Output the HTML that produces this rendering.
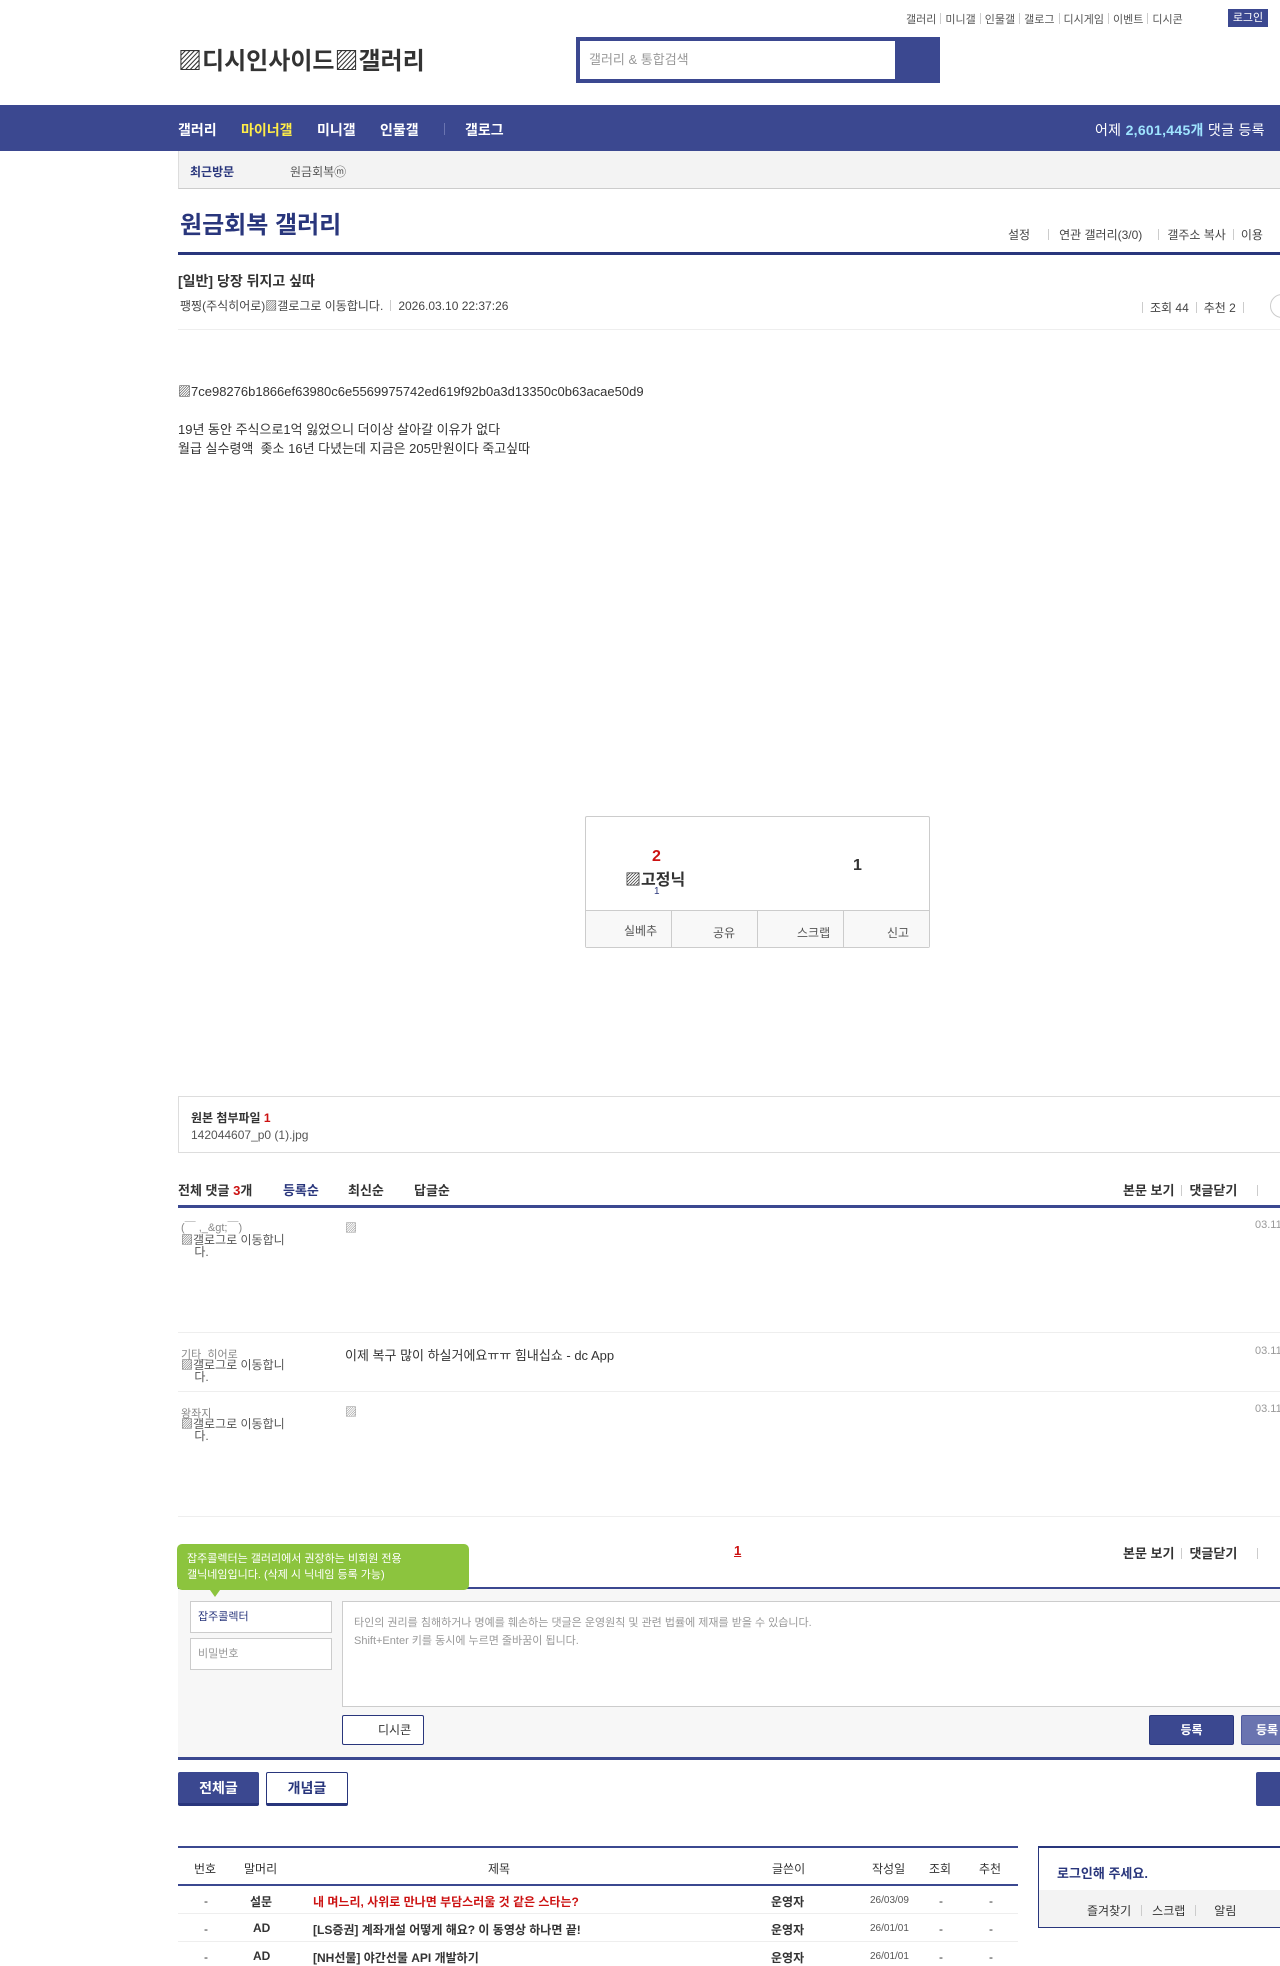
<!DOCTYPE html>
<html><head><meta charset="utf-8">
<style>
*{margin:0;padding:0;box-sizing:border-box}
body{width:1280px;height:1960px;overflow:hidden;background:#fff;position:relative;font-family:"Liberation Sans","Noto Sans CJK KR",sans-serif;color:#333;font-size:12px}
.a{position:absolute;white-space:nowrap}
.navy{color:#29367c}
.b{font-weight:bold}
.sep{display:inline-block;width:1px;height:11px;background:#ccc;margin:0 7px;vertical-align:-1px}
</style></head><body>

<div class="a" style="left:906px;top:11px;font-size:11px;color:#555">갤러리<span class="sep" style="margin:0 4px"></span>미니갤<span class="sep" style="margin:0 4px"></span>인물갤<span class="sep" style="margin:0 4px"></span>갤로그<span class="sep" style="margin:0 4px"></span>디시게임<span class="sep" style="margin:0 4px"></span>이벤트<span class="sep" style="margin:0 4px"></span>디시콘</div>
<div class="a" style="left:1228px;top:9px;width:40px;height:18px;background:#3b4890;color:#fff;font-size:11px;text-align:center;line-height:18px">로그인</div>

<div class="a b" style="left:178px;top:41px;font-size:24px;color:#333">▨디시인사이드▨갤러리</div>

<div class="a" style="left:576px;top:37px;width:364px;height:46px;background:#3b4890"></div>
<div class="a" style="left:580px;top:41px;width:315px;height:38px;background:#fff;color:#999;font-size:13px;line-height:38px;padding-left:9px">갤러리 &amp; 통합검색</div>

<div class="a" style="left:0;top:105px;width:1280px;height:46px;background:#3b4890"></div>
<div class="a b" style="left:178px;top:120px;font-size:14px;color:#fff">갤러리</div>
<div class="a b" style="left:241px;top:120px;font-size:14px;color:#ffed48">마이너갤</div>
<div class="a b" style="left:317px;top:120px;font-size:14px;color:#fff">미니갤</div>
<div class="a b" style="left:380px;top:120px;font-size:14px;color:#fff">인물갤</div>
<div class="a" style="left:444px;top:123px;width:1px;height:12px;background:#6a74b0"></div>
<div class="a b" style="left:465px;top:120px;font-size:14px;color:#fff">갤로그</div>
<div class="a" style="left:1095px;top:120px;font-size:14px;color:#fff;letter-spacing:0.3px">어제 <b style="color:#9fe4ff">2,601,445개</b> 댓글 등록</div>

<div class="a" style="left:178px;top:151px;width:1102px;height:38px;background:#f3f3f3;border-left:1px solid #ddd;border-bottom:1px solid #ccc"></div>
<div class="a b navy" style="left:190px;top:163px;font-size:12px">최근방문</div>
<div class="a" style="left:290px;top:163px;font-size:12px;color:#555">원금회복ⓜ</div>

<div class="a b" style="left:180px;top:205px;font-size:24px;color:#29367c">원금회복 갤러리</div>
<div class="a" style="left:1008px;top:226px;font-size:12px;color:#444">설정<span class="sep" style="margin:0 10px 0 18px"></span>연관 갤러리(3/0)<span class="sep" style="margin:0 8px 0 16px"></span>갤주소 복사<span class="sep"></span>이용</div>
<div class="a" style="left:178px;top:252px;width:1102px;height:3px;background:#29367c"></div>

<div class="a b" style="left:178px;top:271px;font-size:14px;color:#333">[일반] 당장 뒤지고 싶따</div>
<div class="a" style="left:180px;top:297px;font-size:12px;color:#444">팽찡(주식히어로)▨갤로그로 이동합니다.<span class="sep"></span>2026.03.10 22:37:26</div>
<div class="a" style="left:1135px;top:299px;font-size:12px;color:#444"><span class="sep"></span>조회 44<span class="sep"></span>추천 2<span class="sep"></span></div>
<div class="a" style="left:1270px;top:294px;width:24px;height:24px;border:1px solid #ccc;border-radius:12px"></div>
<div class="a" style="left:178px;top:329px;width:1102px;height:1px;background:#eee"></div>

<div class="a" style="left:178px;top:381px;font-size:13px;color:#333">▨7ce98276b1866ef63980c6e5569975742ed619f92b0a3d13350c0b63acae50d9</div>
<div class="a" style="left:178px;top:420px;font-size:13px;color:#333;line-height:19px;white-space:pre">19년 동안 주식으로1억 잃었으니 더이상 살아갈 이유가 없다
월급 실수령액  좆소 16년 다녔는데 지금은 205만원이다 죽고싶따</div>

<div class="a" style="left:585px;top:816px;width:345px;height:132px;border:1px solid #ccc;border-radius:2px"></div>
<div class="a b" style="left:652px;top:848px;font-size:16px;color:#c11">2</div>
<div class="a b" style="left:625px;top:866px;font-size:16px;color:#333">▨고정닉</div>
<div class="a" style="left:654px;top:886px;font-size:10px;color:#29367c">1</div>
<div class="a b" style="left:853px;top:857px;font-size:16px;color:#333">1</div>
<div class="a" style="left:586px;top:910px;width:343px;height:37px;background:#f8f8f8;border-top:1px solid #ccc"></div>
<div class="a" style="left:671px;top:911px;width:1px;height:36px;background:#ccc"></div>
<div class="a" style="left:757px;top:911px;width:1px;height:36px;background:#ccc"></div>
<div class="a" style="left:843px;top:911px;width:1px;height:36px;background:#ccc"></div>
<div class="a" style="left:624px;top:922px;font-size:12px;color:#555">실베추</div>
<div class="a" style="left:713px;top:924px;font-size:12px;color:#555">공유</div>
<div class="a" style="left:797px;top:924px;font-size:12px;color:#555">스크랩</div>
<div class="a" style="left:887px;top:924px;font-size:12px;color:#555">신고</div>

<div class="a" style="left:178px;top:1096px;width:1110px;height:57px;border:1px solid #ddd"></div>
<div class="a b" style="left:191px;top:1109px;font-size:12px;color:#333">원본 첨부파일 <span style="color:#c11">1</span></div>
<div class="a" style="left:191px;top:1128px;font-size:12px;color:#555">142044607_p0 (1).jpg</div>

<div class="a b" style="left:178px;top:1180px;font-size:13px;color:#333">전체 댓글 <span style="color:#c11">3</span>개</div>
<div class="a b" style="left:283px;top:1180px;font-size:13px;color:#29367c">등록순</div>
<div class="a b" style="left:348px;top:1180px;font-size:13px;color:#333">최신순</div>
<div class="a b" style="left:414px;top:1180px;font-size:13px;color:#333">답글순</div>
<div class="a b" style="left:1123px;top:1180px;font-size:13px;color:#333">본문 보기<span class="sep"></span>댓글닫기<span class="sep" style="margin-left:20px"></span></div>
<div class="a" style="left:178px;top:1205px;width:1102px;height:3px;background:#3b4890"></div>

<div class="a" style="left:181px;top:1219px;font-size:11px;color:#888">(￣ ,_&amp;gt;￣)</div>
<div class="a" style="left:181px;top:1234px;font-size:12px;color:#555;line-height:12px">▨갤로그로 이동합니<br>&nbsp;&nbsp;&nbsp;&nbsp;다.</div>
<div class="a" style="left:345px;top:1219px;font-size:12px;color:#888">▨</div>
<div class="a" style="left:1255px;top:1219px;font-size:11px;color:#999">03.11</div>
<div class="a" style="left:178px;top:1332px;width:1102px;height:1px;background:#eee"></div>

<div class="a" style="left:181px;top:1346px;font-size:11px;color:#888">기타_히어로</div>
<div class="a" style="left:181px;top:1359px;font-size:12px;color:#555;line-height:12px">▨갤로그로 이동합니<br>&nbsp;&nbsp;&nbsp;&nbsp;다.</div>
<div class="a" style="left:345px;top:1345px;font-size:13px;color:#333">이제 복구 많이 하실거에요ㅠㅠ 힘내십쇼 - dc App</div>
<div class="a" style="left:1255px;top:1345px;font-size:11px;color:#999">03.11</div>
<div class="a" style="left:178px;top:1391px;width:1102px;height:1px;background:#eee"></div>

<div class="a" style="left:181px;top:1405px;font-size:11px;color:#888">왕좌지</div>
<div class="a" style="left:181px;top:1418px;font-size:12px;color:#555;line-height:12px">▨갤로그로 이동합니<br>&nbsp;&nbsp;&nbsp;&nbsp;다.</div>
<div class="a" style="left:345px;top:1403px;font-size:12px;color:#888">▨</div>
<div class="a" style="left:1255px;top:1403px;font-size:11px;color:#999">03.11</div>
<div class="a" style="left:178px;top:1516px;width:1102px;height:1px;background:#eee"></div>

<div class="a b" style="left:734px;top:1543px;font-size:13px;color:#c11;text-decoration:underline">1</div>
<div class="a b" style="left:1123px;top:1543px;font-size:13px;color:#333">본문 보기<span class="sep"></span>댓글닫기<span class="sep" style="margin-left:20px"></span></div>

<div class="a" style="left:178px;top:1587px;width:1102px;height:173px;background:#f7f7f7;border-top:2px solid #3b4890;border-bottom:3px solid #3b4890"></div>
<div class="a" style="left:177px;top:1544px;width:292px;height:46px;background:#8cc43e;border-radius:5px;color:#fff;font-size:11px;line-height:16px;padding:7px 10px">잡주콜렉터는 갤러리에서 권장하는 비회원 전용<br>갤닉네임입니다. (삭제 시 닉네임 등록 가능)</div>
<div class="a" style="left:210px;top:1590px;width:0;height:0;border-left:5px solid transparent;border-right:5px solid transparent;border-top:7px solid #8cc43e"></div>
<div class="a" style="left:190px;top:1601px;width:142px;height:32px;border:1px solid #ccc;background:#fff;font-size:11px;color:#29367c;line-height:30px;padding-left:7px">잡주콜렉터</div>
<div class="a" style="left:190px;top:1638px;width:142px;height:32px;border:1px solid #ccc;background:#fff;font-size:11px;color:#999;line-height:30px;padding-left:7px">비밀번호</div>
<div class="a" style="left:342px;top:1601px;width:950px;height:106px;border:1px solid #ccc;background:#fff;font-size:11px;color:#999;line-height:18px;padding:12px 11px">타인의 권리를 침해하거나 명예를 훼손하는 댓글은 운영원칙 및 관련 법률에 제재를 받을 수 있습니다.<br>Shift+Enter 키를 동시에 누르면 줄바꿈이 됩니다.</div>
<div class="a" style="left:342px;top:1715px;width:82px;height:30px;border:1px solid #29367c;border-radius:2px;background:#fff;font-size:12px;color:#333;line-height:28px;padding-left:35px">디시콘</div>
<div class="a" style="left:1149px;top:1715px;width:85px;height:30px;background:#3b4890;border:1px solid #29367c;border-radius:2px;color:#fff;font-size:12px;font-weight:bold;text-align:center;line-height:28px">등록</div>
<div class="a" style="left:1241px;top:1715px;width:60px;height:30px;background:#6a74b0;border:1px solid #4f5a9e;border-radius:2px;color:#fff;font-size:12px;font-weight:bold;line-height:28px;padding-left:14px">등록</div>

<div class="a" style="left:178px;top:1772px;width:81px;height:34px;background:#3b4890;border-bottom:3px solid #29367c;border-radius:2px;color:#fff;font-size:14px;font-weight:bold;text-align:center;line-height:32px">전체글</div>
<div class="a" style="left:266px;top:1772px;width:82px;height:34px;background:#fff;border:1px solid #29367c;border-bottom:3px solid #29367c;border-radius:2px;color:#29367c;font-size:14px;font-weight:bold;text-align:center;line-height:30px">개념글</div>
<div class="a" style="left:1256px;top:1772px;width:40px;height:34px;background:#3b4890;border-radius:2px"></div>

<div class="a" style="left:178px;top:1846px;width:840px;height:2px;background:#3b4890"></div>
<div class="a" style="left:178px;top:1884px;width:840px;height:2px;background:#3b4890"></div>
<div class="a" style="left:178px;top:1913px;width:840px;height:1px;background:#eee"></div>
<div class="a" style="left:178px;top:1941px;width:840px;height:1px;background:#eee"></div>
<div class="a" style="left:194px;top:1860px;font-size:12px;color:#333">번호</div>
<div class="a" style="left:244px;top:1860px;font-size:12px;color:#333">말머리</div>
<div class="a" style="left:488px;top:1860px;font-size:12px;color:#333">제목</div>
<div class="a" style="left:772px;top:1860px;font-size:12px;color:#333">글쓴이</div>
<div class="a" style="left:872px;top:1860px;font-size:12px;color:#333">작성일</div>
<div class="a" style="left:929px;top:1860px;font-size:12px;color:#333">조회</div>
<div class="a" style="left:979px;top:1860px;font-size:12px;color:#333">추천</div>

<div class="a" style="left:204px;top:1894px;font-size:12px">-</div>
<div class="a b" style="left:250px;top:1893px;font-size:12px">설문</div>
<div class="a b" style="left:313px;top:1893px;font-size:12px;color:#c11">내 며느리, 사위로 만나면 부담스러울 것 같은 스타는?</div>
<div class="a b" style="left:771px;top:1893px;font-size:12px">운영자</div>
<div class="a" style="left:870px;top:1895px;font-size:10px;color:#555">26/03/09</div>
<div class="a" style="left:939px;top:1894px;font-size:12px">-</div>
<div class="a" style="left:989px;top:1894px;font-size:12px">-</div>

<div class="a" style="left:204px;top:1922px;font-size:12px">-</div>
<div class="a b" style="left:253px;top:1921px;font-size:12px">AD</div>
<div class="a b" style="left:313px;top:1921px;font-size:12px">[LS증권] 계좌개설 어떻게 해요? 이 동영상 하나면 끝!</div>
<div class="a b" style="left:771px;top:1921px;font-size:12px">운영자</div>
<div class="a" style="left:870px;top:1923px;font-size:10px;color:#555">26/01/01</div>
<div class="a" style="left:939px;top:1922px;font-size:12px">-</div>
<div class="a" style="left:989px;top:1922px;font-size:12px">-</div>

<div class="a" style="left:204px;top:1950px;font-size:12px">-</div>
<div class="a b" style="left:253px;top:1949px;font-size:12px">AD</div>
<div class="a b" style="left:313px;top:1949px;font-size:12px">[NH선물] 야간선물 API 개발하기</div>
<div class="a b" style="left:771px;top:1949px;font-size:12px">운영자</div>
<div class="a" style="left:870px;top:1951px;font-size:10px;color:#555">26/01/01</div>
<div class="a" style="left:939px;top:1950px;font-size:12px">-</div>
<div class="a" style="left:989px;top:1950px;font-size:12px">-</div>

<div class="a" style="left:1038px;top:1846px;width:260px;height:82px;border:1px solid #29367c;border-top:2px solid #29367c"></div>
<div class="a" style="left:1039px;top:1890px;width:250px;height:37px;background:#f3f3f3"></div>
<div class="a b" style="left:1057px;top:1863px;font-size:13px;color:#29367c">로그인해 주세요.</div>
<div class="a" style="left:1087px;top:1902px;font-size:12px;color:#333">즐겨찾기<span class="sep" style="margin:0 10px"></span>스크랩<span class="sep" style="margin:0 18px 0 10px"></span>알림</div>

</body></html>
